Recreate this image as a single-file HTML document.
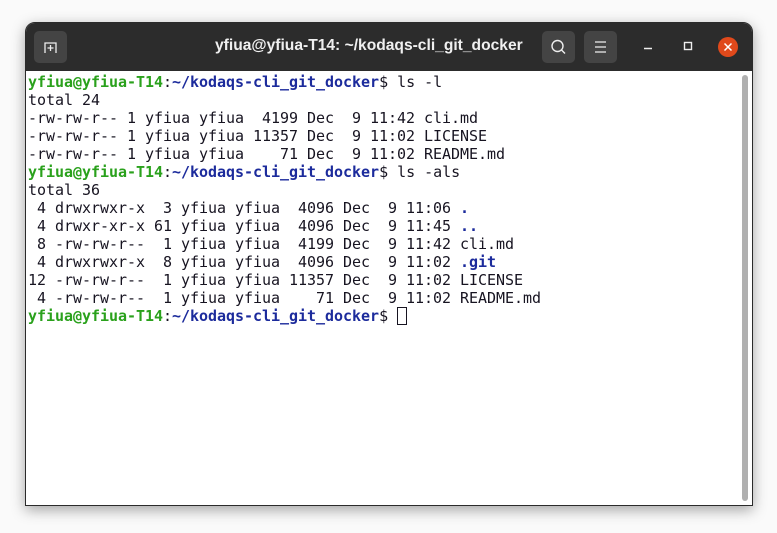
<!DOCTYPE html>
<html><head><style>
body{margin:0;width:777px;height:533px;background:#fafafa;position:relative;overflow:hidden;font-family:"Liberation Sans",sans-serif}
.win{position:absolute;left:25px;top:22px;width:726px;height:482px;background:#fff;border:1px solid #2b2b2b;border-radius:10px 10px 0 0;box-shadow:0 4px 14px rgba(0,0,0,.35);overflow:hidden}
.tb{position:absolute;left:0;top:0;width:726px;height:48px;background:#2c2c2c}
.btn{position:absolute;top:8px;width:33px;height:32px;background:#444;border-radius:5px}
.title{position:absolute;left:189px;top:14px;color:#f0f0f0;font-weight:bold;font-size:15.6px;white-space:nowrap}
.term{position:absolute;left:2px;top:50px;font-family:"DejaVu Sans Mono","Liberation Mono",monospace;font-size:15px;line-height:18px;white-space:pre;color:#171421;letter-spacing:-0.03px}
.g{color:#2aa11c;font-weight:bold}.b{color:#1c2b9c;font-weight:bold}
.sb{position:absolute;left:716px;top:52px;width:6px;height:426px;background:#b0b0b0;border-radius:3px}
</style></head><body>
<div class="win">
<div class="tb">
<div class="btn" style="left:8px"><svg width="33" height="32"><path d="M11 22V12h11v10M16.5 14v6M13.5 17h6" stroke="#eee" stroke-width="1.3" fill="none"/></svg></div>
<div class="title">yfiua@yfiua-T14: ~/kodaqs-cli_git_docker</div>
<div class="btn" style="left:516px"><svg width="33" height="32"><circle cx="15.5" cy="15" r="5.5" stroke="#eee" stroke-width="1.4" fill="none"/><path d="M19.5 19l3.5 3.5" stroke="#eee" stroke-width="1.4"/></svg></div>
<div class="btn" style="left:558px"><svg width="33" height="32"><path d="M11 11h11M11 16h11M11 21h11" stroke="#eee" stroke-width="1.2"/></svg></div>
<svg style="position:absolute;left:615px;top:18px" width="16" height="12"><path d="M3 7.5h8" stroke="#eee" stroke-width="1.5"/></svg>
<svg style="position:absolute;left:655px;top:16px" width="15" height="15"><rect x="3.5" y="3.5" width="7" height="7" stroke="#eee" stroke-width="1.4" fill="none"/></svg>
<div style="position:absolute;left:692px;top:14px;width:20px;height:20px;border-radius:50%;background:#e0491b"><svg width="20" height="20"><path d="M6.5 6.5l7 7M13.5 6.5l-7 7" stroke="#fff" stroke-width="1.5"/></svg></div>
</div>
<div class="term"><span class="g">yfiua@yfiua-T14</span>:<span class="b">~/kodaqs-cli_git_docker</span>$ ls -l
total 24
-rw-rw-r-- 1 yfiua yfiua  4199 Dec  9 11:42 cli.md
-rw-rw-r-- 1 yfiua yfiua 11357 Dec  9 11:02 LICENSE
-rw-rw-r-- 1 yfiua yfiua    71 Dec  9 11:02 README.md
<span class="g">yfiua@yfiua-T14</span>:<span class="b">~/kodaqs-cli_git_docker</span>$ ls -als
total 36
 4 drwxrwxr-x  3 yfiua yfiua  4096 Dec  9 11:06 <span class="b">.</span>
 4 drwxr-xr-x 61 yfiua yfiua  4096 Dec  9 11:45 <span class="b">..</span>
 8 -rw-rw-r--  1 yfiua yfiua  4199 Dec  9 11:42 cli.md
 4 drwxrwxr-x  8 yfiua yfiua  4096 Dec  9 11:02 <span class="b">.git</span>
12 -rw-rw-r--  1 yfiua yfiua 11357 Dec  9 11:02 LICENSE
 4 -rw-rw-r--  1 yfiua yfiua    71 Dec  9 11:02 README.md
<span class="g">yfiua@yfiua-T14</span>:<span class="b">~/kodaqs-cli_git_docker</span>$ <span style="display:inline-block;width:8px;height:16px;border:1px solid #171421;vertical-align:-4px"></span></div>
<div class="sb"></div>
</div>
</body></html>
